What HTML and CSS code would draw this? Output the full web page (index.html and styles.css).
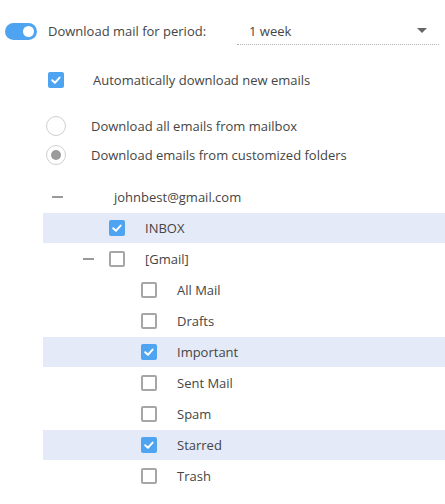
FILE: index.html
```html
<!DOCTYPE html>
<html>
<head>
<meta charset="utf-8">
<link rel="stylesheet" href="styles.css">
</head>
<body>
<div class="page">
  <div class="period-row">
    <span class="toggle"><span class="knob"></span></span>
    <span class="period-label">Download mail for period:</span>
    <div class="select">
      <span class="select-value">1 week</span>
      <span class="arrow"></span>
    </div>
  </div>

  <div class="auto-row">
    <span class="cb checked"><svg viewBox="0 0 16 16"><path d="M4.2 8.3 L6.9 10.8 L11.6 5.6" /></svg></span>
    <span class="auto-label">Automatically download new emails</span>
  </div>

  <div class="radios">
    <div class="radio-row">
      <span class="radio"></span>
      <span class="radio-label">Download all emails from mailbox</span>
    </div>
    <div class="radio-row">
      <span class="radio selected"><span class="dot"></span></span>
      <span class="radio-label">Download emails from customized folders</span>
    </div>
  </div>

  <div class="tree">
    <div class="node lvl0">
      <span class="exp"><span class="dash"></span></span>
      <span class="cb hidden"></span>
      <span class="name">johnbest@gmail.com</span>
    </div>
    <div class="node lvl1 sel">
      <span class="exp"></span>
      <span class="cb checked"><svg viewBox="0 0 16 16"><path d="M4.2 8.3 L6.9 10.8 L11.6 5.6" /></svg></span>
      <span class="name">INBOX</span>
    </div>
    <div class="node lvl1">
      <span class="exp"><span class="dash"></span></span>
      <span class="cb"></span>
      <span class="name">[Gmail]</span>
    </div>
    <div class="node lvl2">
      <span class="exp"></span>
      <span class="cb"></span>
      <span class="name">All Mail</span>
    </div>
    <div class="node lvl2">
      <span class="exp"></span>
      <span class="cb"></span>
      <span class="name">Drafts</span>
    </div>
    <div class="node lvl2 sel">
      <span class="exp"></span>
      <span class="cb checked"><svg viewBox="0 0 16 16"><path d="M4.2 8.3 L6.9 10.8 L11.6 5.6" /></svg></span>
      <span class="name">Important</span>
    </div>
    <div class="node lvl2">
      <span class="exp"></span>
      <span class="cb"></span>
      <span class="name">Sent Mail</span>
    </div>
    <div class="node lvl2">
      <span class="exp"></span>
      <span class="cb"></span>
      <span class="name">Spam</span>
    </div>
    <div class="node lvl2 sel">
      <span class="exp"></span>
      <span class="cb checked"><svg viewBox="0 0 16 16"><path d="M4.2 8.3 L6.9 10.8 L11.6 5.6" /></svg></span>
      <span class="name">Starred</span>
    </div>
    <div class="node lvl2">
      <span class="exp"></span>
      <span class="cb"></span>
      <span class="name">Trash</span>
    </div>
  </div>
</div>
</body>
</html>
```

FILE: styles.css
```css
* { box-sizing: border-box; }
html, body {
  margin: 0;
  padding: 0;
  background: #fff;
}
body {
  font-family: "Open Sans", "Liberation Sans", sans-serif;
  font-size: 13px;
  color: #454545;
  width: 445px;
  height: 504px;
  overflow: hidden;
}
.page {
  display: flex;
  flex-direction: column;
}

/* period row */
.period-row {
  display: flex;
  align-items: center;
  height: 30px;
  margin-top: 16px;
  padding-left: 5px;
}
.toggle {
  width: 32px;
  height: 17px;
  border-radius: 9px;
  background: #4ea4f0;
  display: flex;
  align-items: center;
  justify-content: flex-end;
  padding-right: 3px;
}
.knob {
  width: 11px;
  height: 11px;
  border-radius: 50%;
  background: #fff;
}
.period-label {
  margin-left: 11px;
  width: 189px;
}
.select {
  width: 202px;
  height: 26px;
  display: flex;
  align-items: center;
  justify-content: space-between;
  padding: 0 12px 0 12px;
  border-bottom: 1px dotted #b5b5b5;
  margin-top: 1px;
}
.arrow {
  width: 0;
  height: 0;
  border-left: 5px solid transparent;
  border-right: 5px solid transparent;
  border-top: 5px solid #666;
  margin-top: -2px;
}

/* checkbox */
.cb {
  width: 16px;
  height: 16px;
  border: 2px solid #a6a6a6;
  border-radius: 2px;
  flex: none;
  display: flex;
  align-items: center;
  justify-content: center;
  background: #fff;
}
.cb.checked {
  border: none;
  background: #4ea4f0;
}
.cb.hidden { visibility: hidden; }
.cb svg {
  width: 16px;
  height: 16px;
}
.cb svg path {
  fill: none;
  stroke: #fff;
  stroke-width: 2;
  stroke-linecap: round;
  stroke-linejoin: round;
}

.auto-row {
  display: flex;
  align-items: center;
  height: 20px;
  margin-top: 24px;
  padding-left: 48px;
}
.auto-label { margin-left: 29px; }

/* radios */
.radios {
  display: flex;
  flex-direction: column;
  gap: 9px;
  margin-top: 26px;
  padding-left: 46px;
}
.radio-row {
  display: flex;
  align-items: center;
  height: 20px;
}
.radio {
  width: 20px;
  height: 20px;
  border-radius: 50%;
  border: 1px solid #cfcfcf;
  display: flex;
  align-items: center;
  justify-content: center;
  flex: none;
}
.dot {
  width: 10px;
  height: 10px;
  border-radius: 50%;
  background: #9a9a9a;
}
.radio-label { margin-left: 25px; }

/* tree */
.tree {
  display: flex;
  flex-direction: column;
  gap: 1px;
  margin-top: 17px;
  margin-left: 43px;
}
.node {
  display: flex;
  align-items: center;
  height: 30px;
}
.node.sel { background: #e4eaf7; }
.node.lvl1 { padding-left: 31px; }
.node.lvl2 { padding-left: 63px; }
.exp {
  width: 35px;
  height: 30px;
  display: flex;
  align-items: center;
  padding-left: 9px;
  flex: none;
}
.dash {
  width: 11px;
  height: 2px;
  background: #999;
}
.name { margin-left: 20px; }
```
